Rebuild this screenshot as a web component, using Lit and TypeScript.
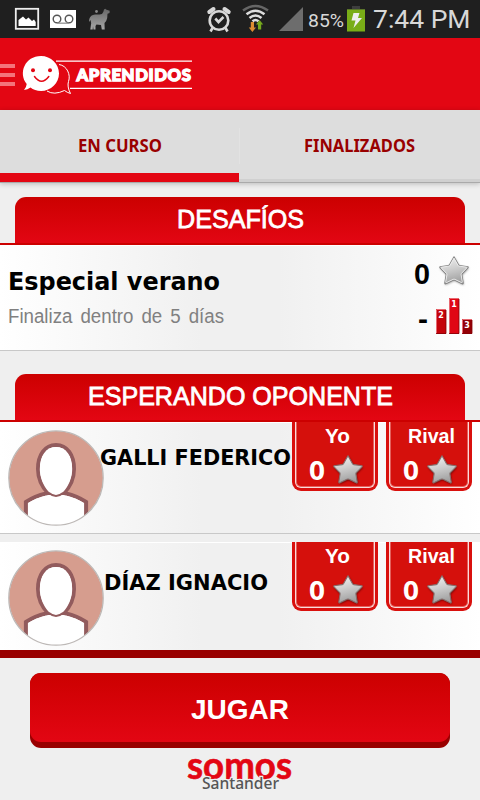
import { LitElement, html, svg, css } from "lit";
import { customElement, property } from "lit/decorators.js";

/** One line of text fitted to a width; the box is as tall as the capitals. */
@customElement("fit-text")
class FitText extends LitElement {
  @property() text = "";
  @property({ type: Number }) w = 100;
  @property({ type: Number }) cap = 18;
  static styles = css`
    :host { display: block; flex: none; }
    svg { display: block; overflow: visible; }
    text { fill: currentColor; stroke: currentColor; stroke-width: var(--bolden, 0); }
  `;
  render() {
    return html`<svg width=${this.w} height=${this.cap}>
      <text x="0" y=${this.cap} textLength=${this.w} lengthAdjust="spacingAndGlyphs">${this.text}</text>
    </svg>`;
  }
}

@customElement("star-icon")
class StarIcon extends LitElement {
  @property({ type: Boolean }) outlined = false;
  static styles = css`
    :host { display: block; flex: none; }
    svg { display: block; overflow: visible; }
  `;
  render() {
    const d = "M16 1.8 L20.5 9.8 Q20.9 10.5 21.700 10.6 L29.8 11.7 Q30.600 12 30 12.8 L24.300 18.7 Q23.8 19.3 23.9 20.1 L25.2 28 Q25.2 29.200 24.200 28.8 L17 25.3 Q16 24.9 15 25.3 L7.8 28.8 Q6.8 29.200 6.8 28 L8.100 20.1 Q8.2 19.3 7.7 18.7 L2 12.8 Q1.400 12 2.200 11.7 L10.3 10.6 Q11.1 10.5 11.5 9.8 Z";
    return html`<svg width="32" height="32" viewBox="0 0 32 32">
      <defs>
        <linearGradient id="g" x1="0" y1="0" x2=".25" y2="1">
          <stop offset="0" stop-color="#f4f4f4" /><stop offset=".5" stop-color="#cfcfcf" /><stop offset="1" stop-color="#a2a2a2" />
        </linearGradient>
        <filter id="s" x="-20%" y="-20%" width="140%" height="140%"><feGaussianBlur stdDeviation="1" /></filter>
      </defs>
      <path d=${d} transform="translate(.5 1)" fill=${this.outlined ? "#999" : "#5a1010"} filter="url(#s)" />
      <path d=${d} fill="url(#g)" stroke=${this.outlined ? "#858585" : "#86706e"} stroke-width="1.1" stroke-linejoin="round" />
      ${this.outlined
        ? svg`<path d=${d} transform="translate(1.6 1.6) scale(.9)" fill="none" stroke="#f1f1f1" stroke-width="1" />`
        : ""}
    </svg>`;
  }
}

@customElement("score-badge")
class ScoreBadge extends LitElement {
  @property() label = "";
  @property({ type: Number }) w = 26;
  @property({ type: Number }) inset = 32;
  static styles = css`
    :host { display: block; flex: none; width: 86px; height: 69px; }
    .frame { box-sizing: border-box; height: 69px; padding: 0 3px 3px; background: #d9100d; border-radius: 0 0 9px 9px; }
    .inner { box-sizing: border-box; height: 66px; border: solid #fbdcda; border-width: 0 1px 1px; box-shadow: inset 1px 0 #e4605c, inset -1px 0 #e4605c, inset 0 -1px #e4605c; border-radius: 0 0 6px 6px; background: #d5100c; color: #fff; padding-top: 7px; }
    .label { font: bold 20px "Liberation Sans", sans-serif; }
    .row { display: flex; align-items: flex-start; margin: 11px 0 0 13px; gap: 7px; }
    .score { font: bold 27px "Noto Sans", sans-serif; margin-top: 7px; }
  `;
  render() {
    return html`<div class="frame"><div class="inner">
      <fit-text class="label" style="margin-left:${this.inset - 4}px" .text=${this.label} .w=${this.w} .cap=${14}></fit-text>
      <div class="row">
        <fit-text class="score" text="0" .w=${16} .cap=${19}></fit-text>
        <star-icon></star-icon>
      </div>
    </div></div>`;
  }
}

@customElement("player-row")
class PlayerRow extends LitElement {
  @property() name = "";
  @property({ type: Number }) w = 190;
  @property({ type: Number }) lead = 0;
  @property({ type: Number }) drop = 28;
  static styles = css`
    :host { display: block; background: linear-gradient(90deg, #fff, #f0f0f0 42%, #f0f0f0 58%, #fff); }
    .row { display: flex; height: 100%; align-items: flex-start; box-shadow: inset 0 1px #fff; }
    .avatar { flex: none; margin: 8px 0 0 8px; display: block; }
    .name { font: bold 21px "DejaVu Sans", sans-serif; color: #000; }
    .badges { display: flex; gap: 8px; margin: 0 8px 0 auto; }
  `;
  render() {
    return html`<div class="row">
      <svg class="avatar" width="96" height="96" viewBox="0 0 96 96">
        <defs><clipPath id="c"><circle cx="48" cy="48" r="47" /></clipPath></defs>
        <circle cx="48" cy="48" r="47" fill="#d69d8e" />
        <g clip-path="url(#c)">
          <path d="M17.900 100V72Q27 66 38 63.500L48 67L58 63.500Q69 66 78.100 72V100Z" fill="#fff" stroke="#925b5d" stroke-width="4" />
          <path d="M48 15C59 15 66 25 66 39C66 49 61 58 55.500 63.500L48 66L40.500 63.500C35 58 30 49 30 39C30 25 37 15 48 15Z" fill="#fff" stroke="#925b5d" stroke-width="4" />
          <path d="M20 100V73Q29 67.500 40 65L56 65Q67 67.500 76 73V100Z" fill="#fff" />
          <path d="M48 17C58 17 64.200 26 64.200 39C64.200 51 56 65.500 48 65.500C40 65.500 31.800 51 31.800 39C31.800 26 38 17 48 17Z" fill="#fff" />
          <path d="M41 63Q48 69 55 63" fill="none" stroke="#925b5d" stroke-width="2" />
        </g>
        <circle cx="48" cy="48" r="47.200" fill="none" stroke="#bdb9b7" stroke-width="1.300" />
      </svg>
      <fit-text class="name" style="margin:${this.drop}px 0 0 ${this.lead}px" .text=${this.name} .w=${this.w} .cap=${15}></fit-text>
      <div class="badges">
        <score-badge label="Yo" .w=${25} .inset=${32.5}></score-badge>
        <score-badge label="Rival" .w=${47} .inset=${22}></score-badge>
      </div>
    </div>`;
  }
}

@customElement("app-root")
class AppRoot extends LitElement {
  static styles = css`
    :host { display: block; width: 480px; height: 800px; overflow: hidden; background: #efefef; }
    svg { display: block; flex: none; overflow: visible; }
    .status { height: 38px; background: #1f1f1f; color: #d8d8d8; display: flex; }
    .battery-text { font: 18px Roboto, sans-serif; margin: 14px 0 0 5px; }
    .clock { font: 26.5px Roboto, sans-serif; margin: 9px 0 0 8px; }
    .header { height: 72px; background: #e30613; }
    .tabs { display: flex; height: 72px; background: #ddd; border-bottom: 1px solid #aaa; box-shadow: 0 1px 5px rgba(0,0,0,.22); color: #990000; font: bold 17.500px "Noto Sans", sans-serif; }
    .tab { box-sizing: border-box; display: flex; justify-content: center; padding-top: 29px; }
    .active { width: 239px; border-bottom: 9px solid #e30613; }
    .other { width: 241px; border-bottom: 3px solid #d0d0d0; }
    .divider { width: 1px; height: 36px; background: #e2e2e2; margin: 18px -1px 0 0; }
    .section { display: flex; justify-content: center; box-sizing: border-box; height: 46px; margin: 14px 15px 0; padding-top: 13px; border-radius: 11px 11px 0 0; background: linear-gradient(#c00, #e30613); color: #fff; font: 26px "Liberation Sans", sans-serif; --bolden: .8px; }
    .second { margin-top: 23px; }
    .rule { height: 2px; background: #c00; }
    .card { display: flex; justify-content: space-between; box-sizing: border-box; height: 106px; border-bottom: 1px solid #c8c8c8; background: linear-gradient(90deg, #fff, #f0f0f0 42%, #f0f0f0 58%, #fff); box-shadow: inset 0 1px #fff; }
    .event { padding: 28px 0 0 8px; }
    .event-name { font: bold 24px "DejaVu Sans", sans-serif; color: #000; }
    .deadline { font: 20px "Liberation Sans", sans-serif; word-spacing: 3px; color: #808080; margin-top: 18px; }
    .totals { display: grid; grid-template-columns: auto auto; column-gap: 8px; justify-items: end; align-content: start; padding: 10px 8px 0 0; font: bold 29px "Liberation Sans", sans-serif; color: #000; }
    .total { margin: 9px -2px 0 0; }
    .dash { margin: 22px 0 0 0; }
    .star { margin-right: 2px; }
    .podium { margin: 11px .5px 0 0; }
    .first { height: 111px; border-bottom: 1px solid #c8c8c8; }
    .next { height: 108px; margin-top: 8px; }
    .bar { height: 8px; background: #990000; }
    .play { display: block; width: 420px; height: 75px; margin: 15px auto 0; padding: 0 0 6px; background: #900; border: 0; border-radius: 11px; color: #fff; font: bold 28px "Liberation Sans", sans-serif; }
    .face { display: flex; justify-content: center; box-sizing: border-box; height: 69px; padding-top: 26.500px; border-radius: 11px; background: linear-gradient(#c00, #e30613); }
    .brand { margin: 10px auto 0; }
    .halo { paint-order: stroke; stroke: #efefef; stroke-width: 2.500px; }
  `;
  render() {
    return html`
      <div class="status">
        <svg width="279" height="38">
          <rect x="15.800" y="8.800" width="22.400" height="20" fill="none" stroke="#eee" stroke-width="1.800" />
          <path d="M18.500 26V20L23 16.500L26 19.500L28.500 17.500L32 21L34 19.500L35.700 22V26Z" fill="#fff" />
          <rect x="50" y="10" width="26" height="18" fill="#fff" />
          <g fill="none" stroke="#555" stroke-width="1.400"><circle cx="57" cy="19" r="3.800" /><circle cx="69" cy="19" r="3.800" /><path d="M57 23.200H69" stroke="#999" /></g>
          <defs><linearGradient id="ll" x1="0" y1="0" x2="0" y2="1"><stop offset="0" stop-color="#666" /><stop offset="1" stop-color="#a8a8a8" /></linearGradient></defs>
          <path d="M89.300 19Q90.500 14.800 95 14.500L99.500 14.500Q102.500 14.500 103.300 12L104 9.500L105.300 8.800L106.500 9.800L109.700 10.800L109.500 13L107.500 13.800L107.200 18Q106.500 21.500 104.500 23L104.700 29.500H101.800L101 25L96.500 24.500L95.500 26V29.500H93.500L93 26L92.700 29.500H90.300L91.200 23L90.500 20L89 22Z" fill="url(#ll)" />
          <circle cx="96.500" cy="11.500" r="1.400" fill="#888" />
          <g fill="none" stroke="#d8d8d8" stroke-width="2.600">
            <circle cx="219" cy="20.500" r="9.300" />
            <path d="M215.300 18.500L218.500 22L223.500 17" />
            <path d="M212.500 28L210.500 31.500M225.500 28L227.500 31.500" />
            <path d="M209.300 12L213.500 9M228.700 12L224.500 9" stroke-width="4" stroke-linecap="round" />
          </g>
          <g fill="none" stroke="#ddd" stroke-width="2.500">
            <path d="M243 10.500Q255.500 1.500 268 10.500" stroke="#666" />
            <path d="M246.500 14.300Q255.500 7.300 264.500 14.300" /><path d="M249.500 18Q255.500 13 261.500 18" /><path d="M252.500 21.300Q255.500 18.800 258.500 21.300" />
          </g>
          <path d="M250.800 22H254V27.500H256L252.400 32L248.800 27.500H250.800Z" fill="#dc8c32" />
          <path d="M258 29.500V24.500H256L259.600 20L263.200 24.500H261.200V29.500Z" fill="#76aa1d" />
        </svg>
        <svg width="24" height="38"><path d="M0 31L24 7V31Z" fill="#6d6d6d" /></svg>
        <fit-text class="battery-text" text="85%" .w=${36} .cap=${12.5}></fit-text>
        <svg width="21" height="38">
          <path d="M8 6H16V9H21V12H3V9H8Z" fill="#3e3e3e" /><rect x="3" y="9.500" width="18" height="22" fill="#79ad17" />
          <path d="M9.500 13H15.500L14 18H18L9.500 28L11.500 20.500H7.500Z" fill="#eee" />
        </svg>
        <fit-text class="clock" text="7:44 PM" .w=${97.5} .cap=${19}></fit-text>
      </div>
      <div class="header">
        <svg width="480" height="72" viewBox="0 38 480 72">
          <path d="M0 64H15V68H0ZM0 73H15V77H0ZM0 82H15V86H0Z" fill="#f4737b" />
          <path d="M56 61.200H192M70 88.300H192" stroke="#fff" stroke-width="1.300" />
          <path d="M59 64.500C67 65.500 71 75 68.500 81.500C67.500 84.500 68 89 70.500 93.500Q67 92.500 64.500 90.500Q54 95.500 47 91" fill="none" stroke="#fff" stroke-width="1" />
          <path d="M41 56C51 56 59 64 59 73.500C59 83 51 91 41 91C37 91 33 89.500 30.500 87.500Q27.500 89.500 24 90Q26.500 87 26.700 84C18 73 25 56 41 56Z" fill="#fff" />
          <circle cx="33" cy="70.300" r="2" fill="#e30613" /><circle cx="50" cy="70.300" r="2" fill="#e30613" />
          <path d="M34.500 76.500Q41.500 86 48.800 76.500" fill="none" stroke="#e30613" stroke-width="1.500" stroke-linecap="round" />
          <text x="76.500" y="80.700" textLength="115" lengthAdjust="spacingAndGlyphs" font-family="Lato, sans-serif" font-weight="900" font-size="16" letter-spacing=".6" fill="#fff" stroke="#fff" stroke-width="1.300">APRENDIDOS</text>
        </svg>
      </div>
      <div class="tabs">
        <div class="tab active"><fit-text text="EN CURSO" .w=${84} .cap=${12.5}></fit-text></div>
        <div class="divider"></div>
        <div class="tab other"><fit-text text="FINALIZADOS" .w=${111} .cap=${12.5}></fit-text></div>
      </div>
      <div class="section"><fit-text text="DESAFÍOS" .w=${127} .cap=${18}></fit-text></div>
      <div class="rule"></div>
      <div class="card">
        <div class="event">
          <fit-text class="event-name" text="Especial verano" .w=${212} .cap=${17}></fit-text>
          <fit-text class="deadline" text="Finaliza dentro de 5 días" .w=${216} .cap=${14.5}></fit-text>
        </div>
        <div class="totals">
          <fit-text class="total" text="0" .w=${16} .cap=${20}></fit-text>
          <star-icon class="star" outlined></star-icon>
          <fit-text class="dash" text="-" .w=${10} .cap=${20}></fit-text>
          <svg class="podium" width="36" height="36">
            <rect x="0" y="11" width="10" height="25" fill="#c4040b" /><rect x="13" y="0" width="10" height="36" fill="#e00714" /><rect x="26" y="21" width="10" height="15" fill="#930006" />
            <path d="M.5 36V11.500H10M13.500 36V.5H23M26.500 36V21.500H36" fill="none" stroke="#e86870" stroke-width="1" />
            <path d="M0 35.500H10V12M13 35.500H23V1M26 35.500H36V22" fill="none" stroke="#850006" stroke-width=".8" />
            <g fill="#fff" font-family="DejaVu Sans, sans-serif" font-weight="700" font-size="8" text-anchor="middle"><text x="5" y="20">2</text><text x="18" y="8.500">1</text><text x="31" y="30">3</text></g>
          </svg>
        </div>
      </div>
      <div class="section second"><fit-text text="ESPERANDO OPONENTE" .w=${305} .cap=${18}></fit-text></div>
      <div class="rule"></div>
      <player-row class="first" name="GALLI FEDERICO" .w=${191} .lead=${-4} .drop=${28}></player-row>
      <player-row class="next" name="DÍAZ IGNACIO" .w=${164} .lead=${-0.5} .drop=${33}></player-row>
      <div class="bar"></div>
      <button class="play"><span class="face"><fit-text text="JUGAR" .w=${98} .cap=${19}></fit-text></span></button>
      <svg class="brand" width="106" height="34">
        <text x="0" y="20.500" textLength="105" lengthAdjust="spacingAndGlyphs" font-family="Lato, sans-serif" font-weight="700" font-size="38" fill="#e30613" stroke="#e30613" stroke-width=".6">somos</text>
        <text class="halo" x="15" y="31" textLength="77" lengthAdjust="spacingAndGlyphs" font-family="Noto Sans, sans-serif" font-weight="500" font-size="16.500" fill="#555">Santander</text>
      </svg>
    `;
  }
}
